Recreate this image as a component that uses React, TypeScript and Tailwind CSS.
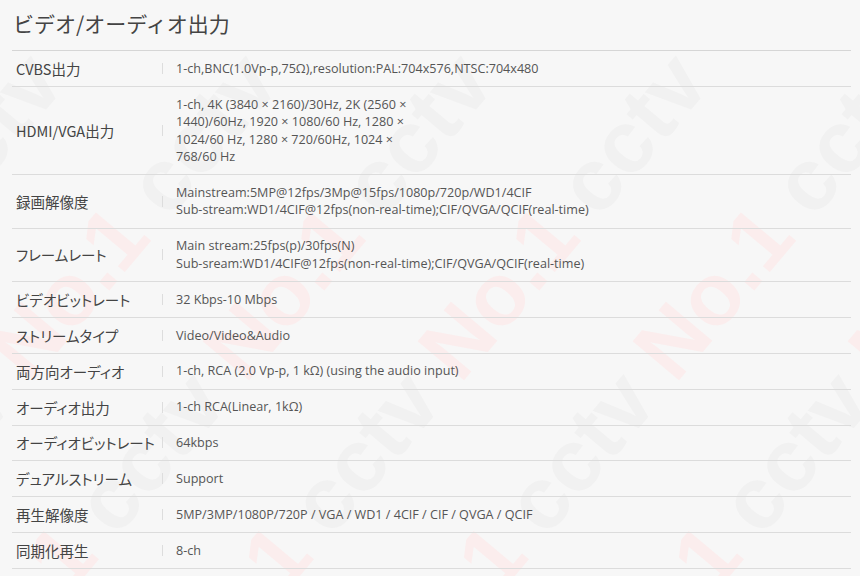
import React from 'react';

interface Spec {
  label: string;
  value: string[];
}

const specs: Spec[] = [
  { label: 'CVBS出力', value: ['1-ch,BNC(1.0Vp-p,75Ω),resolution:PAL:704x576,NTSC:704x480'] },
  {
    label: 'HDMI/VGA出力',
    value: [
      '1-ch, 4K (3840 × 2160)/30Hz, 2K (2560 ×',
      '1440)/60Hz, 1920 × 1080/60 Hz, 1280 ×',
      '1024/60 Hz, 1280 × 720/60Hz, 1024 ×',
      '768/60 Hz',
    ],
  },
  {
    label: '録画解像度',
    value: [
      'Mainstream:5MP@12fps/3Mp@15fps/1080p/720p/WD1/4CIF',
      'Sub-stream:WD1/4CIF@12fps(non-real-time);CIF/QVGA/QCIF(real-time)',
    ],
  },
  {
    label: 'フレームレート',
    value: [
      'Main stream:25fps(p)/30fps(N)',
      'Sub-sream:WD1/4CIF@12fps(non-real-time);CIF/QVGA/QCIF(real-time)',
    ],
  },
  { label: 'ビデオビットレート', value: ['32 Kbps-10 Mbps'] },
  { label: 'ストリームタイプ', value: ['Video/Video&Audio'] },
  { label: '両方向オーディオ', value: ['1-ch, RCA (2.0 Vp-p, 1 kΩ) (using the audio input)'] },
  { label: 'オーディオ出力', value: ['1-ch RCA(Linear, 1kΩ)'] },
  { label: 'オーディオビットレート', value: ['64kbps'] },
  { label: 'デュアルストリーム', value: ['Support'] },
  { label: '再生解像度', value: ['5MP/3MP/1080P/720P / VGA / WD1 / 4CIF / CIF / QVGA / QCIF'] },
  { label: '同期化再生', value: ['8-ch'] },
];

// faint diagonal "No.1 cctv" watermark behind the table
function Watermark() {
  const lines = [0, 1, 2, 3, 4, 5, 6, 7];
  return (
    <div aria-hidden className="pointer-events-none absolute inset-0 overflow-hidden">
      {lines.map((i) => (
        <div
          key={i}
          className="absolute origin-left whitespace-nowrap font-['Liberation_Sans',sans-serif] text-[88px] font-bold leading-none"
          style={{ left: i * 215 - 475, top: 640, transform: 'rotate(-50deg)' }}
        >
          <span className="text-[#fbeded]">No.1 </span>
          <span className="text-[#f1f1f1]">cctv </span>
          <span className="text-[#fbeded]">No.1 </span>
          <span className="text-[#f1f1f1]">cctv</span>
        </div>
      ))}
    </div>
  );
}

export default function App() {
  return (
    <div className="relative h-[576px] w-[860px] overflow-hidden bg-[#f7f7f7]">
      <Watermark />
      <div className="relative pl-[12px] pr-[9px] pt-[8px]">
        <h2 className="pl-px font-['Noto_Sans_CJK_JP',sans-serif] text-[21px] leading-[30px] text-[#444]">
          ビデオ/オーディオ出力
        </h2>
        <div className="mt-[12px] border-t border-[#d6d6d6]">
          {specs.map((s) => (
            <div key={s.label} className="flex items-center border-b border-[#dcdcdc] py-[8.7px]">
              <div className="w-[150px] shrink-0 pl-[4px] font-['Noto_Sans_CJK_JP',sans-serif] text-[14.5px] leading-[17px] text-[#444] [font-feature-settings:'palt']">
                {s.label}
              </div>
              <span className="h-[11px] w-px shrink-0 bg-[#dddddd]" />
              <div className="ml-[13px] font-['Open_Sans',sans-serif] text-[12.6px] leading-[17.5px] text-[#555]">
                {s.value.map((v) => (
                  <div key={v}>{v}</div>
                ))}
              </div>
            </div>
          ))}
        </div>
      </div>
    </div>
  );
}
